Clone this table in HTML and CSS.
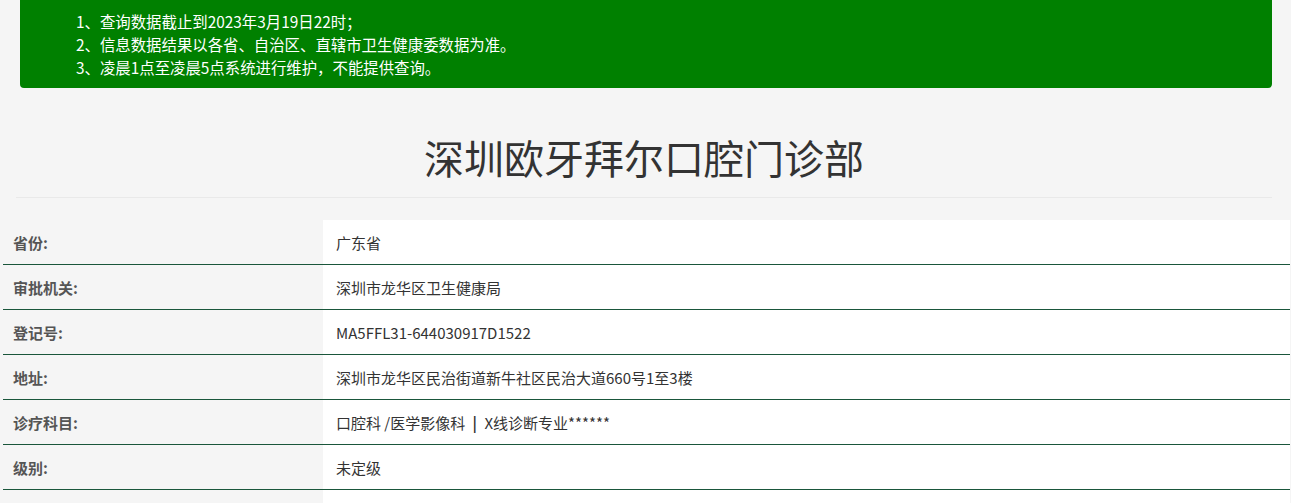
FILE: index.html
```html
<!DOCTYPE html>
<html lang="zh-CN">
<head>
<meta charset="utf-8">
<title>深圳欧牙拜尔口腔门诊部</title>
<link rel="stylesheet" href="styles.css">
</head>
<body>
<div class="top">
  <div class="notice">
    <p>1、查询数据截止到2023年3月19日22时；</p>
    <p>2、信息数据结果以各省、自治区、直辖市卫生健康委数据为准。</p>
    <p>3、凌晨1点至凌晨5点系统进行维护，不能提供查询。</p>
  </div>
  <h1 class="title">深圳欧牙拜尔口腔门诊部</h1>
</div>
<table class="info">
  <tr><th>省份:</th><td>广东省</td></tr>
  <tr><th>审批机关:</th><td>深圳市龙华区卫生健康局</td></tr>
  <tr><th>登记号:</th><td>MA5FFL31-644030917D1522</td></tr>
  <tr><th>地址:</th><td>深圳市龙华区民治街道新牛社区民治大道660号1至3楼</td></tr>
  <tr><th>诊疗科目:</th><td>口腔科 /医学影像科 <span class="sep">|</span> X线诊断专业******</td></tr>
  <tr><th>级别:</th><td>未定级</td></tr>
  <tr><th></th><td></td></tr>
</table>
</body>
</html>
```

FILE: styles.css
```css
html, body {
  margin: 0;
  padding: 0;
  background: #f5f5f5;
  font-family: "Noto Sans CJK SC", "Noto Sans", sans-serif;
  color: #333;
}
.top {
  margin: 0 19px 0 16px;
}
.notice {
  margin-left: 4px;
  background: #008000;
  color: #fff;
  border-radius: 0 0 4px 4px;
  padding: 10px 0 9px 56px;
  font-size: 15.4px;
  line-height: 23px;
  height: 69px;
}
.notice p {
  margin: 0;
}
.title {
  margin: 0;
  text-align: center;
  font-weight: normal;
  font-size: 40px;
  color: #333;
  line-height: 48px;
  padding: 45px 0 16px;
  border-bottom: 1px solid #e9e9e9;
}
.info {
  margin: 22px 0 0 3px;
  width: 1287px;
  border-collapse: collapse;
  font-size: 15px;
}
.info th, .info td {
  height: 44px;
  padding: 0;
  border-bottom: 1px solid #1a563b;
  vertical-align: middle;
  text-align: left;
}
.info th {
  width: 320px;
  background: #f5f5f5;
  color: #555;
  font-weight: bold;
  padding-left: 10px;
  box-sizing: border-box;
}
.info td {
  background: #fff;
  padding-left: 13px;
}
.sep {
  font-weight: bold;
  color: #333;
  margin: 0 4px;
}
```
